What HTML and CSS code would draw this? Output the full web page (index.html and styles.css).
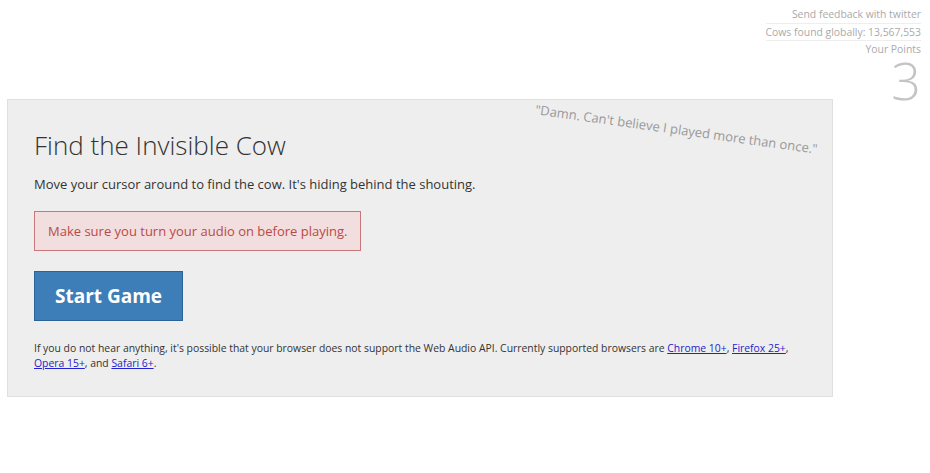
FILE: index.html
```html
<!DOCTYPE html>
<html>
<head>
<meta charset="utf-8">
<link rel="stylesheet" href="styles.css">
</head>
<body>
<div class="top">
  <div class="stats">
    <div class="stat-line">Send feedback with twitter</div>
    <div class="stat-line">Cows found globally: 13,567,553</div>
    <div class="stat-label">Your Points</div>
    <div class="points">3</div>
  </div>
</div>
<div class="panel">
  <div class="quote">"Damn. Can't believe I played more than once."</div>
  <h1 class="title">Find the Invisible Cow</h1>
  <p class="lead">Move your cursor around to find the cow. It's hiding behind the shouting.</p>
  <div class="alert">Make sure you turn your audio on before playing.</div>
  <button class="start">Start Game</button>
  <p class="note">If you do not hear anything, it's possible that your browser does not support the Web Audio API. Currently supported browsers are <a href="#">Chrome 10+</a>, <a href="#">Firefox 25+</a>, <a href="#">Opera 15+</a>, and <a href="#">Safari 6+</a>.</p>
</div>
</body>
</html>
```
FILE: styles.css
```css
html, body {
  margin: 0;
  padding: 0;
  background: #fff;
  font-family: "Open Sans", "Liberation Sans", sans-serif;
  color: #333;
}
.top {
  display: flex;
  justify-content: flex-end;
  padding: 6px 9px 0 0;
  height: 93px;
  box-sizing: border-box;
}
.stats {
  text-align: right;
  color: #aaa;
  font-size: 10.4px;
  line-height: 16.5px;
}
.stat-line {
  border-bottom: 1px solid #eee;
}
.stat-label {
  line-height: 16px;
}
.points {
  font-size: 52px;
  font-weight: 200;
  line-height: 42px;
  margin-top: 2px;
  color: #c4c4c4;
}
.panel {
  position: relative;
  margin: 6px 0 0 7px;
  width: 826px;
  height: 298px;
  box-sizing: border-box;
  background: #eeeeee;
  border: 1px solid #e0e0e0;
  padding: 27px 26px 0 26px;
}
.quote {
  position: absolute;
  top: 20px;
  right: 13px;
  font-size: 13px;
  color: #999;
  transform: rotate(8deg);
  transform-origin: center;
}
.title {
  margin: 0;
  font-size: 26px;
  font-weight: 300;
  line-height: 36px;
  color: #333;
}
.lead {
  margin: 11px 0 0 0;
  font-size: 13px;
  line-height: 20px;
}
.alert {
  display: inline-block;
  margin-top: 17px;
  padding: 9px 13px;
  font-size: 13px;
  line-height: 20px;
  color: #b94a48;
  background: #f2dede;
  border: 1px solid #c9777a;
}
.start {
  display: block;
  margin-top: 20px;
  width: 149px;
  height: 50px;
  padding: 0;
  font-family: "Open Sans", "Liberation Sans", sans-serif;
  font-size: 19px;
  font-weight: 700;
  color: #fff;
  background: #3d7db8;
  border: 1px solid #2c6396;
  border-radius: 0;
}
.note {
  margin: 20px 0 0 0;
  font-size: 10.4px;
  line-height: 15px;
  color: #333;
}
.note a {
  color: #2222cc;
}
```
